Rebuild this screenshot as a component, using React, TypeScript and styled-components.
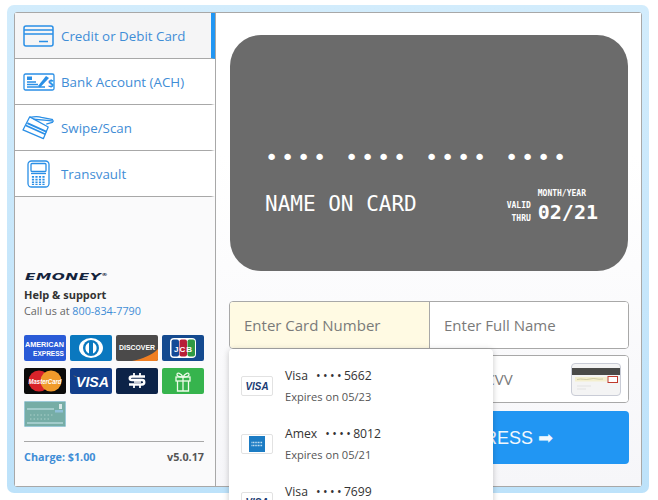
import React from "react";
import styled, { createGlobalStyle } from "styled-components";

const Global = createGlobalStyle`
  html, body { margin: 0; padding: 0; height: 500px; overflow: hidden; background: #fff; }
  * { box-sizing: border-box; }
  #root { font-family: "Open Sans", "Noto Sans", sans-serif; }
`;

const Page = styled.div`
  height: 500px;
  padding: 5px 9px 7px 7px;
  overflow: hidden;
`;
const Frame = styled.div`
  height: 488px;
  padding: 7px 7px 6px 7px;
  border-radius: 7px;
  background: linear-gradient(#d2ecfc, #bde2fa);
`;
const Shell = styled.div`
  position: relative;
  display: flex;
  height: 475px;
  border: 1px solid #a8a8a8;
  border-radius: 3px;
  background: #fff;
`;
const Sidebar = styled.aside`
  width: 201px;
  flex: none;
  display: flex;
  flex-direction: column;
  border-right: 1px solid #a8a8a8;
  background: #fafafb;
`;
const NavItem = styled.div<{ $active?: boolean }>`
  height: 46px;
  flex: none;
  display: flex;
  align-items: center;
  padding-left: 7px;
  border-bottom: 1px solid #a8a8a8;
  border-right: 4px solid ${(p) => (p.$active ? "#2196f3" : "transparent")};
  background: ${(p) => (p.$active ? "#f5f5f6" : "#fff")};
  color: #3f8dd6;
  font-size: 13.35px;
`;
const NavIcon = styled.span`
  width: 33px;
  margin-right: 6px;
  flex: none;
  display: flex;
  justify-content: center;
  svg { display: block; }
`;
const SideFoot = styled.div`
  margin-top: auto;
  padding: 0 11px 21px 9px;
`;
const Brand = styled.div`
  font-family: "DejaVu Sans", sans-serif;
  font-size: 9.5px;
  line-height: 12px;
  font-weight: 700;
  font-style: italic;
  color: #14233c;
  letter-spacing: 0.3px;
  margin-left: 1px;
  transform: scaleX(1.62);
  transform-origin: left center;
`;
const BrandMark = styled.span`
  font-size: 4px;
  vertical-align: 4px;
  letter-spacing: 0;
`;
const HelpTitle = styled.div`
  margin-top: 4px;
  font-size: 11px;
  line-height: 16px;
  font-weight: 700;
  color: #333;
`;
const HelpLine = styled.div`
  font-size: 10.8px;
  line-height: 16px;
  color: #666;
  span { color: #3f8dd6; }
`;
const Badges = styled.div`
  display: grid;
  grid-template-columns: repeat(4, 42px);
  grid-auto-rows: 26px;
  column-gap: 4px;
  row-gap: 7px;
  margin-top: 16px;
`;
const Badge = styled.div<{ $bg: string }>`
  border-radius: 2px;
  overflow: hidden;
  background: ${(p) => p.$bg};
  svg { display: block; }
`;
const Summary = styled.div`
  display: flex;
  justify-content: space-between;
  margin-top: 14px;
  padding-top: 7px;
  border-top: 1px solid #a8a8a8;
  font-size: 10.8px;
  line-height: 16px;
  font-weight: 700;
  color: #3f8dd6;
  span + span { color: #555; }
`;
const Main = styled.main`
  flex: 1;
  display: flex;
  flex-direction: column;
  padding: 22px 12px 0 13px;
  background: linear-gradient(#fff 30%, #f6f6f9);
`;
const CardPreview = styled.div`
  width: 398px;
  height: 236px;
  margin-left: 1px;
  padding: 107px 30px 0 35px;
  flex: none;
  border-radius: 31px;
  background: #6b6b6b;
  color: #fff;
  font-family: "DejaVu Sans Mono", monospace;
`;
const CardNumber = styled.div`
  font-size: 22px;
  letter-spacing: 2.76px;
  line-height: 32px;
  white-space: pre;
`;
const CardBottom = styled.div`
  display: flex;
  justify-content: space-between;
  margin-top: 8px;
`;
const CardName = styled.div`
  font-size: 21px;
  line-height: 36px;
  margin-top: 4px;
`;
const Expiry = styled.div`
  display: flex;
  align-items: flex-end;
  gap: 7px;
  margin-top: 7px;
`;
const Thru = styled.div`
  font-size: 8px;
  line-height: 13px;
  font-weight: 700;
  text-align: right;
`;
const DateCol = styled.div`
  display: flex;
  flex-direction: column;
`;
const DateLabel = styled.div`
  font-size: 8px;
  line-height: 10px;
  font-weight: 700;
`;
const DateValue = styled.div`
  font-size: 20px;
  line-height: 26px;
  font-weight: 700;
`;
const Fields = styled.div<{ $gap: number }>`
  position: relative;
  display: flex;
  height: 48px;
  flex: none;
  margin-top: ${(p) => p.$gap}px;
  border: 1px solid #a8a8a8;
  border-radius: 4px;
  overflow: hidden;
  background: #fff;
`;
const Field = styled.input<{ $fill?: boolean }>`
  width: 50%;
  border: 0;
  outline: 0;
  padding: 0 14px;
  background: ${(p) => (p.$fill ? "#fffae3" : "#fff")};
  font: 15px "Open Sans", sans-serif;
  & + & { border-left: 1px solid #a8a8a8; }
  &::placeholder { color: #7a7a7a; opacity: 1; }
`;
const CvvArt = styled.div`
  position: absolute;
  right: 7px;
  top: 7px;
  width: 50px;
  height: 33px;
  border: 1px solid #c9ccd6;
  border-radius: 4px;
  background: #f4f4f4;
  overflow: hidden;
  svg { display: block; }
`;
const Submit = styled.button`
  flex: none;
  height: 53px;
  margin-top: 8px;
  border: 0;
  border-radius: 4px;
  display: flex;
  align-items: center;
  justify-content: flex-end;
  padding: 0 76px 0 0;
  background: #2196f3;
  color: #f2f8fd;
  font: 18px "Liberation Sans", Arial, sans-serif;
`;
const Dropdown = styled.div`
  position: absolute;
  left: 214px;
  top: 336px;
  width: 264px;
  height: 200px;
  padding-top: 18px;
  border-radius: 4px;
  background: #fff;
  box-shadow: 0 1px 6px rgba(0, 0, 0, 0.22);
`;
const SavedCard = styled.div`
  display: flex;
  align-items: flex-start;
  height: 58px;
  padding-left: 12px;
  gap: 12px;
`;
const SavedIcon = styled.div`
  width: 32px;
  height: 20px;
  margin-top: 9px;
  flex: none;
  border: 1px solid #e2e2e2;
  border-radius: 2px;
  background: #fff;
  svg { display: block; }
`;
const SavedText = styled.div`
  display: flex;
  flex-direction: column;
  gap: 5px;
`;
const SavedTop = styled.div`
  display: flex;
  gap: 8px;
  font-size: 12.2px;
  line-height: 17px;
  color: #333;
`;
const SavedDots = styled.span`
  letter-spacing: 2.4px;
`;
const SavedSub = styled.div`
  font-size: 11.1px;
  line-height: 16px;
  color: #555;
`;

const B = "#2a8fe6";

const CardIcon = () => (
  <svg width="31" height="22" viewBox="0 0 31 22" fill="none" stroke={B} strokeWidth="1.5">
    <rect x="1" y="1" width="29" height="20" rx="2" />
    <path d="M1 5h29M1 9h29M16 16.500h9" />
  </svg>
);
const CheckIcon = () => (
  <svg width="32" height="18" viewBox="0 0 32 18" fill="none" stroke={B} strokeWidth="1.3">
    <rect x="1" y="1" width="30" height="16" rx="1.500" />
    <rect x="4" y="3.500" width="5" height="3.500" fill={B} stroke="none" />
    <path d="M4 9h9M4 11.500h11M4 14h18" />
    <path d="M15 13l8-10 3 2-9 9.500z" fill={B} stroke="none" />
    <text x="25" y="14" fontSize="10" fontWeight="700" fill={B} stroke="none" fontFamily="Open Sans">$</text>
  </svg>
);
const SwipeIcon = () => (
  <svg width="34" height="25" viewBox="0 0 34 25" fill="none" stroke={B} strokeWidth="1.300" strokeLinejoin="round">
    <path d="M8 1.500L1 15l21 9 5-12z" fill="#fff" />
    <path d="M5.500 8l20 9M4 10.500l20 9" strokeWidth="1.800" />
    <path d="M8 2c5-1 8-1.500 12 0l12 2.500M12 4l11 1 10 1M25 9l7-2" />
  </svg>
);
const VaultIcon = () => (
  <svg width="23" height="28" viewBox="0 0 23 28" fill="none" stroke={B} strokeWidth="1.300">
    <rect x="1" y="1" width="21" height="26" rx="3.500" />
    <rect x="4" y="3.500" width="15" height="8" rx="1" />
    <path d="M4 13.500h15" />
    <path d="M6 16v9M9.500 16v9M13 16v9M16.500 16v9" strokeWidth="2.200" strokeDasharray="1.800 .9" />
  </svg>
);

const SvgT = styled.text`
  font-family: "Liberation Sans", Arial, sans-serif;
  font-weight: 700;
`;

const Amex = () => (
  <svg width="42" height="26" viewBox="0 0 42 26">
    <SvgT x="1" y="12" fontSize="7.500" fill="#fff" textLength="39" lengthAdjust="spacingAndGlyphs">AMERICAN</SvgT>
    <SvgT x="9" y="21" fontSize="7.500" fill="#fff" textLength="31" lengthAdjust="spacingAndGlyphs">EXPRESS</SvgT>
  </svg>
);
const Diners = () => (
  <svg width="42" height="26" viewBox="0 0 42 26">
    <ellipse cx="21" cy="13" rx="12" ry="10" fill="#fff" />
    <circle cx="21" cy="13" r="8" fill="#0a78bf" />
    <path d="M19 7.500a6 6 0 0 0 0 11zM23 7.500a6 6 0 0 1 0 11z" fill="#fff" />
  </svg>
);
const Discover = () => (
  <svg width="42" height="26" viewBox="0 0 42 26">
    <path d="M42 14v12H16C26 24 36 20 42 14z" fill="#ef7e22" />
    <SvgT x="3" y="14.500" fontSize="6.500" fill="#fff" textLength="36" lengthAdjust="spacingAndGlyphs">DISCOVER</SvgT>
  </svg>
);
const Jcb = () => (
  <svg width="42" height="26" viewBox="0 0 42 26">
    <rect x="8" y="3" width="26" height="20" rx="4" fill="#fff" />
    <rect x="9.500" y="4.500" width="7.500" height="17" rx="2" fill="#144a97" />
    <rect x="17.500" y="4.500" width="7.500" height="17" rx="2" fill="#b81f38" />
    <rect x="25.500" y="4.500" width="7.500" height="17" rx="2" fill="#2f9a43" />
    <SvgT x="12" y="16.500" fontSize="8" fill="#fff" textLength="18">JCB</SvgT>
  </svg>
);
const Master = () => (
  <svg width="42" height="26" viewBox="0 0 42 26">
    <circle cx="15" cy="13" r="10.500" fill="#d8232a" />
    <circle cx="27" cy="13" r="10.500" fill="#f09a2b" />
    <SvgT x="4.500" y="15.500" fontSize="7" fill="#fff" fontStyle="italic" textLength="33" lengthAdjust="spacingAndGlyphs">MasterCard</SvgT>
  </svg>
);
const VisaBig = () => (
  <svg width="42" height="26" viewBox="0 0 42 26">
    <path d="M3 7.500c3 .5 5 2 6 5l-1.500-3z" fill="#f5a623" />
    <SvgT x="6" y="19" fontSize="15" fontStyle="italic" fill="#fff" textLength="33" lengthAdjust="spacingAndGlyphs">VISA</SvgT>
  </svg>
);
const Sezzle = () => (
  <svg width="42" height="26" viewBox="0 0 42 26" fill="none" stroke="#fff" strokeWidth="2.400">
    <path d="M29 8.500H16c-3 0-3 3.500 0 3.500h10c3 0 3 4.500 0 4.500H13" />
    <path d="M18 5v3M24 5v3M18 17v3M24 17v3" strokeWidth="1.800" />
    <path d="M18 14h7" strokeWidth="1.500" />
  </svg>
);
const Gift = () => (
  <svg width="42" height="26" viewBox="0 0 42 26" fill="none" stroke="#eefbe9" strokeWidth="1.300">
    <rect x="14" y="9" width="14" height="4" />
    <path d="M15.500 13v10h11V13M21 9v14" />
    <path d="M21 9c-2-4-6-5-6-2.500S18 9 21 9zM21 9c2-4 6-5 6-2.500S24 9 21 9z" />
  </svg>
);
const CheckBadge = () => (
  <svg width="42" height="26" viewBox="0 0 42 26" fill="none">
    <rect x=".5" y=".5" width="41" height="25" stroke="#9cc9d8" />
    <path d="M3 8h27M3 22h36" stroke="#cfeaf0" />
    <rect x="31" y="9" width="8" height="2.500" fill="#8fc0d8" />
    <rect x="35" y="3" width="3" height="5" fill="#d8e8e8" />
    <path d="M6 14h24M6 18h20" stroke="#a9cfc7" strokeDasharray="1.500 2" />
  </svg>
);
const VisaSmall = () => (
  <svg width="30" height="18" viewBox="0 0 30 18">
    <SvgT x="3.500" y="13" fontSize="11" fontStyle="italic" fill="#1a3a72" textLength="23" lengthAdjust="spacingAndGlyphs">VISA</SvgT>
  </svg>
);
const AmexSmall = () => (
  <svg width="30" height="18" viewBox="0 0 30 18">
    <rect x="7" y="1" width="16" height="16" fill="#1c7cc4" />
    <path d="M9.500 7.500h11M9.500 10.500h11" stroke="#cfe6f5" strokeWidth="1.500" strokeDasharray="1 .6" />
  </svg>
);
const CvvCard = () => (
  <svg width="48" height="31" viewBox="0 0 48 31" fill="none">
    <rect x="0" y="4" width="48" height="7" fill="#4a4a48" />
    <rect x="3" y="13" width="32" height="4.500" fill="#f4efcf" />
    <path d="M5 15.500c5-1.500 8 1 13-.5s7 1 13 0" stroke="#b9b58e" strokeWidth=".6" />
    <rect x="36" y="12.500" width="9.500" height="6" fill="#fff" stroke="#c0392b" />
    <path d="M5 22h14M5 25h9" stroke="#e2e2e2" />
  </svg>
);

const nav = [
  { label: "Credit or Debit Card", icon: <CardIcon />, active: true },
  { label: "Bank Account (ACH)", icon: <CheckIcon /> },
  { label: "Swipe/Scan", icon: <SwipeIcon /> },
  { label: "Transvault", icon: <VaultIcon /> },
];

const badges = [
  { bg: "#2a5bd7", art: <Amex /> },
  { bg: "#0a78bf", art: <Diners /> },
  { bg: "#4b4a4a", art: <Discover /> },
  { bg: "#144a8f", art: <Jcb /> },
  { bg: "#0b0b0b", art: <Master /> },
  { bg: "#123f8c", art: <VisaBig /> },
  { bg: "#0c2348", art: <Sezzle /> },
  { bg: "#36b44d", art: <Gift /> },
  { bg: "#76ada6", art: <CheckBadge /> },
];

const saved: { brand: string; last: string; exp?: string; icon: React.ReactNode }[] = [
  { brand: "Visa", last: "5662", exp: "05/23", icon: <VisaSmall /> },
  { brand: "Amex", last: "8012", exp: "05/21", icon: <AmexSmall /> },
  { brand: "Visa", last: "7699", icon: <VisaSmall /> },
];

export default function App() {
  return (
    <Page>
      <Global />
      <Frame>
        <Shell>
          <Sidebar>
            {nav.map((n) => (
              <NavItem key={n.label} $active={n.active}>
                <NavIcon>{n.icon}</NavIcon>
                {n.label}
              </NavItem>
            ))}
            <SideFoot>
              <Brand>
                EMONEY<BrandMark>®</BrandMark>
              </Brand>
              <HelpTitle>Help &amp; support</HelpTitle>
              <HelpLine>
                Call us at <span>800-834-7790</span>
              </HelpLine>
              <Badges>
                {badges.map((b, i) => (
                  <Badge key={i} $bg={b.bg}>
                    {b.art}
                  </Badge>
                ))}
              </Badges>
              <Summary>
                <span>Charge: $1.00</span>
                <span>v5.0.17</span>
              </Summary>
            </SideFoot>
          </Sidebar>
          <Main>
            <CardPreview>
              <CardNumber>{"•••• •••• •••• ••••"}</CardNumber>
              <CardBottom>
                <CardName>NAME ON CARD</CardName>
                <Expiry>
                  <Thru>
                    VALID
                    <br />
                    THRU
                  </Thru>
                  <DateCol>
                    <DateLabel>MONTH/YEAR</DateLabel>
                    <DateValue>02/21</DateValue>
                  </DateCol>
                </Expiry>
              </CardBottom>
            </CardPreview>
            <Fields $gap={30}>
              <Field $fill placeholder="Enter Card Number" />
              <Field placeholder="Enter Full Name" />
            </Fields>
            <Fields $gap={6}>
              <Field placeholder="MM/YY" />
              <Field placeholder="Enter CVV" />
              <CvvArt>
                <CvvCard />
              </CvvArt>
            </Fields>
            <Submit>EXPRESS ➡</Submit>
          </Main>
          <Dropdown>
            {saved.map((s, i) => (
              <SavedCard key={i}>
                <SavedIcon>{s.icon}</SavedIcon>
                <SavedText>
                  <SavedTop>
                    <span>{s.brand}</span>
                    <span>
                      <SavedDots>••••</SavedDots>
                      {s.last}
                    </span>
                  </SavedTop>
                  {s.exp && <SavedSub>Expires on {s.exp}</SavedSub>}
                </SavedText>
              </SavedCard>
            ))}
          </Dropdown>
        </Shell>
      </Frame>
    </Page>
  );
}
